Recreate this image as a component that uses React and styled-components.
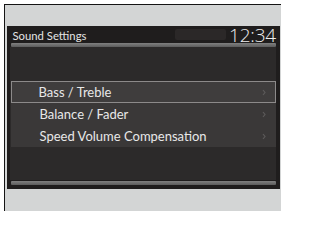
import React from 'react';
import styled, { createGlobalStyle } from 'styled-components';

const GlobalStyle = createGlobalStyle`
    html, body {
        margin: 0;
        padding: 0;
        background: #ffffff;
        overflow: hidden;
    }
    body {
        font-family: Lato, "Open Sans", "Liberation Sans", sans-serif;
    }
`

const Page = styled.div`
    width: 281px;
    height: 211px;
    padding: 4px 0 0 4px;
    box-sizing: border-box;
`

const Frame = styled.div`
    height: 100%;
    border-left: 1.5px solid #141414;
    border-top: 1.5px solid #141414;
    background: #d3d5d5;
    padding: 21px 1px 0 1.5px;
    box-sizing: border-box;
`

const Screen = styled.div`
    height: 163px;
    background: #1f1d1d;
    padding: 0 4px 4px 4px;
    box-sizing: border-box;
    display: flex;
    flex-direction: column;
`

const Header = styled.div`
    height: 17px;
    display: flex;
    align-items: center;
    justify-content: space-between;
    position: relative;
`

const Title = styled.div`
    color: #e4e4e4;
    font-size: 11.3px;
    padding-left: 2px;
    margin-top: 1px;
`

const Clock = styled.div`
    color: #eeeeee;
    font-family: "Open Sans", Lato, sans-serif;
    font-weight: 300;
    font-size: 19px;
    line-height: 17px;
    margin-top: 2px;
    letter-spacing: -0.2px;
`

const Shade = styled.div`
    position: absolute;
    left: 164px;
    top: 3px;
    width: 51px;
    height: 11px;
    border-radius: 2px;
    background: #2b2828;
    filter: blur(0.6px);
`

const Bar = styled.div`
    height: ${p => p.$h || 4}px;
    background: linear-gradient(#808080, #5c5c5c);
    border-radius: 1px;
    flex-shrink: 0;
`

const Panel = styled.div`
    flex: 1;
    background: #2c2a2a;
    margin-left: -1px;
    padding: 34px 0 0 1px;
    margin-bottom: 1px;
`

const List = styled.div`
    display: flex;
    flex-direction: column;
    background: #3a3838;
`

const Row = styled.div`
    height: 22px;
    box-sizing: border-box;
    display: flex;
    align-items: center;
    justify-content: space-between;
    padding: 0 9px 0 28px;
    color: #e8e8e8;
    font-size: 13px;
    background: ${p => (p.$selected ? '#3f3d3d' : 'transparent')};
    border: 1px solid ${p => (p.$selected ? '#8c8a8a' : 'transparent')};
    padding-left: ${p => (p.$selected ? 27 : 28)}px;
`

const Chevron = styled.svg`
    width: 4px;
    height: 7px;
    flex-shrink: 0;
`

const items = ['Bass / Treble', 'Balance / Fader', 'Speed Volume Compensation'];

function App() {
    return (
        <Page>
            <GlobalStyle />
            <Frame>
                <Screen>
                    <Header>
                        <Title>Sound Settings</Title>
                        <Shade />
                        <Clock>12:34</Clock>
                    </Header>
                    <Bar $h={4} />
                    <Panel>
                        <List>
                            {items.map((item, i) => (
                                <Row key={item} $selected={i === 0}>
                                    <span>{item}</span>
                                    <Chevron viewBox="0 0 4 7">
                                        <path d="M1 1 L3 3.5 L1 6" stroke="#5c5a5a" strokeWidth="1.2" fill="none" />
                                    </Chevron>
                                </Row>
                            ))}
                        </List>
                    </Panel>
                    <Bar $h={4} />
                </Screen>
            </Frame>
        </Page>
    );
}

export default App;
